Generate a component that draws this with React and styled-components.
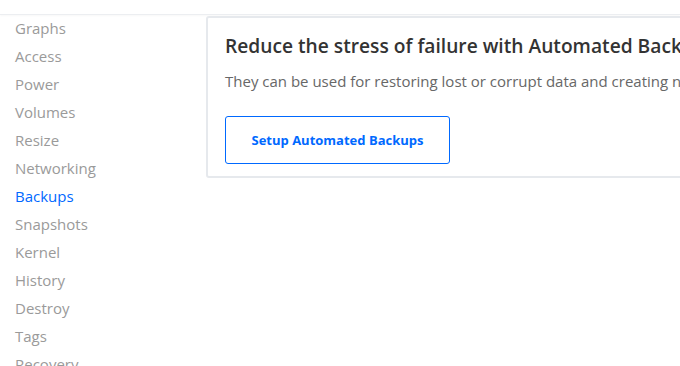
import React from 'react';
import styled, { createGlobalStyle } from 'styled-components';

const FONT = `"Open Sans", "Liberation Sans", Arial, sans-serif`;
const BLUE = '#0069ff';

const GlobalStyle = createGlobalStyle`
    html, body {
        margin: 0;
        padding: 0;
        background: #fff;
        font-family: ${FONT};
        overflow: hidden;
    }
`;

const Page = styled.div`
    width: 680px;
    height: 366px;
    overflow: hidden;
`;

const TopBar = styled.div`
    height: 14px;
    border-bottom: 1px solid #eceef1;
    box-shadow: 0 1px 2px rgba(0,0,0,0.03);
`;

const Body = styled.div`
    display: flex;
    align-items: flex-start;
`;

const Sidebar = styled.nav`
    width: 206px;
    flex-shrink: 0;
    padding-left: 15px;
    box-sizing: border-box;
    margin-top: -1px;
`;

const NavItem = styled.div`
    font-size: 15px;
    line-height: 28px;
    color: ${({ active }) => active ? BLUE : '#9a9a9a'};
`;

const Card = styled.section`
    flex: 1;
    margin-top: 1px;
    margin-right: -120px;
    border: 2px solid #e6e9ed;
    border-radius: 3px;
    padding: 16px 17px 12px;
    white-space: nowrap;
`;

const Title = styled.h2`
    margin: 0;
    font-size: 19.2px;
    font-weight: 600;
    color: #333;
    line-height: 24px;
`;

const Text = styled.p`
    margin: 12px 0 0;
    font-size: 15px;
    color: #676767;
    line-height: 22px;
`;

const Button = styled.button`
    display: block;
    margin-top: 24px;
    width: 225px;
    height: 48px;
    border: 1px solid ${BLUE};
    border-radius: 3px;
    background: #fff;
    color: ${BLUE};
    font-family: ${FONT};
    font-size: 13px;
    font-weight: 700;
    cursor: pointer;
`;

const items = ['Graphs', 'Access', 'Power', 'Volumes', 'Resize', 'Networking', 'Backups', 'Snapshots', 'Kernel', 'History', 'Destroy', 'Tags', 'Recovery'];

export default function App() {
    return (
        <Page>
            <GlobalStyle />
            <TopBar />
            <Body>
                <Sidebar>
                    {items.map(i => <NavItem key={i} active={i === 'Backups'}>{i}</NavItem>)}
                </Sidebar>
                <Card>
                    <Title>Reduce the stress of failure with Automated Backups</Title>
                    <Text>They can be used for restoring lost or corrupt data and creating new Droplets.</Text>
                    <Button>Setup Automated Backups</Button>
                </Card>
            </Body>
        </Page>
    );
}
